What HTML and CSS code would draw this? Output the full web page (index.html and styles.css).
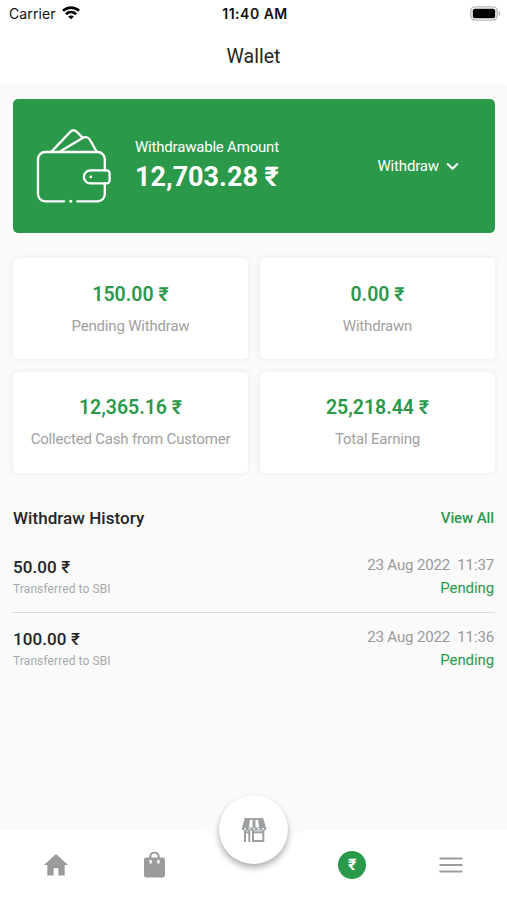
FILE: index.html
```html
<!DOCTYPE html>
<html lang="en">
<head>
<meta charset="utf-8">
<meta name="viewport" content="width=device-width, initial-scale=1">
<title>Wallet</title>
<link rel="stylesheet" href="styles.css">
</head>
<body>
<div class="screen">
  <header class="header">
    <div class="status">
      <div class="carrier">
        <span>Carrier</span>
        <svg class="wifi" viewBox="0 0 18 14" width="18" height="14"><g fill="none" stroke="#000" stroke-width="2.8"><path d="M1 4.7C5.7.5 12.3.5 17 4.7"/><path d="M3.9 8.200c3-2.700 7.200-2.700 10.200 0"/></g><path d="M9 13.3 6.1 10.5c1.6-1.5 4.2-1.5 5.8 0z"/></svg>
      </div>
      <span class="clock">11:40 AM</span>
      <svg class="battery" viewBox="0 0 31 15" width="31" height="15"><rect x=".9" y=".9" width="26.2" height="13.2" rx="4" fill="#fff" stroke="#b8b8b8" stroke-width="1.4"/><rect x="2.8" y="2.7" width="22.4" height="9.6" rx="2"/><path d="M28.7 5.1c1.9.7 1.9 4.1 0 4.8z" fill="#aaa"/></svg>
    </div>
    <h1 class="title">Wallet</h1>
  </header>

  <main class="content">
    <section class="banner">
      <svg class="wallet" viewBox="0 0 76 76" width="76" height="76"><g fill="none" stroke="#fff" stroke-width="2.3" stroke-linecap="round" stroke-linejoin="round"><path d="M28 73.3H9.2a7.2 7.2 0 0 1-7.2-7.2V31.2A7.2 7.2 0 0 1 9.2 24h52.4a7.2 7.2 0 0 1 7.2 7.2v11.2M68.8 55.4v10.7a7.2 7.2 0 0 1-7.2 7.2H41.2"/><path d="M54.4 42.4h16.2a3 3 0 0 1 3 3v7a3 3 0 0 1-3 3H54.4a6.5 6.5 0 0 1 0-13z"/><path d="M15.5 23.6 34 4.1c2.1-2.2 4.7-2.2 6.8-.2l5.4 5.2M24.5 23.2l21.7-13c3.2-2 6.3-1.2 8 2l6.4 11.4"/></g><circle cx="34.8" cy="73.3" r="1.5" fill="#fff"/><circle cx="54.8" cy="48.9" r="1.4" fill="#fff"/></svg>
      <div class="available">
        <span class="available-label">Withdrawable Amount</span>
        <strong class="available-sum">12,703.28 ₹</strong>
      </div>
      <div class="withdraw">
        <span>Withdraw</span>
        <svg viewBox="0 0 13 9" width="13" height="9"><path d="m1.2 1.5 5.3 5.2 5.3-5.2" fill="none" stroke="#fff" stroke-width="2.1"/></svg>
      </div>
    </section>

    <section class="stats">
      <div class="card"><strong class="sum">150.00 ₹</strong><span class="label">Pending Withdraw</span></div>
      <div class="card"><strong class="sum">0.00 ₹</strong><span class="label">Withdrawn</span></div>
      <div class="card"><strong class="sum">12,365.16 ₹</strong><span class="label">Collected Cash from Customer</span></div>
      <div class="card"><strong class="sum">25,218.44 ₹</strong><span class="label">Total Earning</span></div>
    </section>

    <section class="history">
      <div class="history-head"><h2>Withdraw History</h2><a class="view-all">View All</a></div>
      <div class="entry">
        <div class="entry-main"><span class="entry-sum">50.00 ₹</span><span class="entry-note">Transferred to SBI</span></div>
        <div class="entry-side"><span class="entry-date">23 Aug 2022&nbsp; 11:37</span><span class="entry-state">Pending</span></div>
      </div>
      <div class="entry">
        <div class="entry-main"><span class="entry-sum">100.00 ₹</span><span class="entry-note">Transferred to SBI</span></div>
        <div class="entry-side"><span class="entry-date">23 Aug 2022&nbsp; 11:36</span><span class="entry-state">Pending</span></div>
      </div>
    </section>
  </main>

  <nav class="nav">
    <svg class="nav-shape" viewBox="0 0 507 70" width="507" height="70"><path d="M0 0h199c10 0 14 4 17 12 5 16 20 28 38 28s33-12 38-28c3-8 7-12 17-12h198v70H0z" fill="#fff"/></svg>
    <div class="nav-item"><svg viewBox="0 0 24 22" width="24" height="22"><path d="M12 0 0 11h3.3v10.6h6.3v-7.3h4.8v7.3h6.3V11H24z" fill="#9b9b9b"/></svg></div>
    <div class="nav-item"><svg viewBox="0 0 21 26" width="21" height="26"><path d="M2.3 5.4h16.4a2.3 2.3 0 0 1 2.3 2.3v15.6a2.3 2.3 0 0 1-2.3 2.3H2.3A2.3 2.3 0 0 1 0 23.3V7.7a2.3 2.3 0 0 1 2.3-2.3z" fill="#9b9b9b"/><path d="M6.3 6V4.7a4.2 4.2 0 0 1 8.4 0V6" fill="none" stroke="#9b9b9b" stroke-width="2"/><path d="M5.5 8h2.2v3.5H5.5zM13.3 8h2.2v3.5h-2.2z" fill="#fff"/></svg></div>
    <div class="nav-item"></div>
    <div class="nav-item"><span class="rupee">₹</span></div>
    <div class="nav-item"><svg viewBox="0 0 24 16" width="24" height="16"><path d="M.5 1.5h23M.5 8h23M.5 14.5h23" stroke="#9b9b9b" stroke-width="2.2"/></svg></div>
    <div class="fab"><svg viewBox="0 0 26 24" width="26" height="24"><path d="M3.8 0h18.400l3 10.500c0 1.200-.8 2-2 2H2.800c-1.200 0-2-.8-2-2z" fill="#9da0a2"/><path d="M9 1.800h2.500V9.500H7.900zM14.500 1.800H17l1.100 7.700h-3.600z" fill="#fff"/><path d="M3 10.800h20" stroke="#fff" stroke-width="1.200" stroke-dasharray="2 2.500"/><path d="M4 12v12M8.300 12v12M12 12v10.900h10.300V12M11 14.300h12" fill="none" stroke="#9da0a2" stroke-width="2"/><path d="M3 14.300h6" stroke="#9da0a2" stroke-width="2"/></svg></div>
  </nav>
</div>
</body>
</html>
```
FILE: styles.css
```css
* { box-sizing: border-box; }
body { margin: 0; background: #fafafa; color: #252525; font-family: Roboto, "Noto Sans", sans-serif; }
h1, h2 { margin: 0; }
svg { display: block; }
.screen { width: 507px; height: 900px; display: flex; flex-direction: column; background: #fafafa; overflow: hidden; }
.header { height: 85px; background: #fff; box-shadow: 0 1px 4px rgba(0,0,0,.025); }
.status { height: 27px; padding: 0 6px 0 9px; display: grid; grid-template-columns: 1fr auto 1fr; align-items: center; color: #111; }
.carrier { display: flex; align-items: center; gap: 6px; font: 400 14px/20px Inter, sans-serif; letter-spacing: .12px; }
.wifi { margin-top: -2px; }
.clock { font: 600 14px/20px Inter, sans-serif; letter-spacing: .5px; }
.battery { justify-self: end; }
.title { padding-top: 17px; text-align: center; font-size: 19.5px; line-height: 26px; font-weight: 400; }
.content { flex: 1; padding: 14px 12px 0 13px; }
.banner { height: 134px; padding: 0 36px 0 23px; border-radius: 5px; background: #2b994a; color: #fff; display: flex; align-items: center; }
.available { margin-left: 23px; padding-bottom: 2px; display: flex; flex-direction: column; }
.available-label { font-size: 15px; line-height: 20px; letter-spacing: -.2px; }
.available-sum { margin-top: 4px; font-size: 27px; line-height: 32px; font-weight: 700; white-space: nowrap; }
.withdraw { margin-left: auto; display: flex; align-items: center; gap: 7px; font-size: 15px; letter-spacing: -.15px; }
.stats { margin-top: 25px; display: grid; grid-template-columns: 1fr 1fr; grid-auto-rows: 101px; gap: 12.5px 12px; }
.card { padding-top: 25px; border-radius: 5px; background: #fff; box-shadow: 0 0 5px 1px rgba(0,0,0,.05); display: flex; flex-direction: column; align-items: center; }
.card:nth-child(n+3) { padding-top: 24px; }
.sum { color: #2b994a; font-size: 19.5px; line-height: 24px; font-weight: 600; }
.label { margin-top: 9px; color: #a0a0a0; font-size: 15px; line-height: 20px; letter-spacing: -.19px; }
.history { margin-top: 32.5px; }
.history-head { height: 26px; padding-right: 1px; display: flex; justify-content: space-between; align-items: center; }
.history-head h2 { font-size: 17px; font-weight: 500; letter-spacing: .06px; }
.view-all { color: #2b994a; font-size: 15px; font-weight: 500; letter-spacing: -.1px; }
.entry { height: 72px; display: flex; justify-content: space-between; }
.history-head + .entry { margin-top: 9px; }
.entry + .entry { border-top: 1px solid #d8dbdb; }
.entry-main, .entry-side { display: flex; flex-direction: column; padding-top: 16px; }
.entry-side { align-items: flex-end; padding: 15px 1px 0 0; }
.entry + .entry .entry-main { padding-top: 15px; }
.entry + .entry .entry-side { padding-top: 14px; }
.entry-sum { font-size: 17px; line-height: 22px; font-weight: 500; letter-spacing: .1px; }
.entry-note { margin-top: 3px; color: #a7aaaa; font-size: 12px; line-height: 16px; letter-spacing: .1px; }
.entry-date { color: #999; font-size: 15px; line-height: 20px; letter-spacing: -.13px; }
.entry-state { margin-top: 3px; color: #2b994a; font-size: 15px; line-height: 20px; letter-spacing: -.1px; }
.nav { position: relative; height: 70px; padding: 0 7px; display: grid; grid-template-columns: repeat(5, 1fr); align-items: center; }
.nav-shape { position: absolute; left: 0; top: 0; }
.nav-item { position: relative; display: flex; justify-content: center; }
.rupee { width: 28px; height: 28px; border-radius: 50%; background: #2b994a; color: #fff; font-size: 16px; line-height: 28px; font-weight: 700; text-align: center; }
.fab { position: absolute; left: 219px; top: -35px; width: 69px; height: 69px; border-radius: 50%; background: #fff; box-shadow: 0 4px 6px rgba(0,0,0,.25), 0 1px 3px rgba(0,0,0,.1); display: flex; align-items: center; justify-content: center; }
```
